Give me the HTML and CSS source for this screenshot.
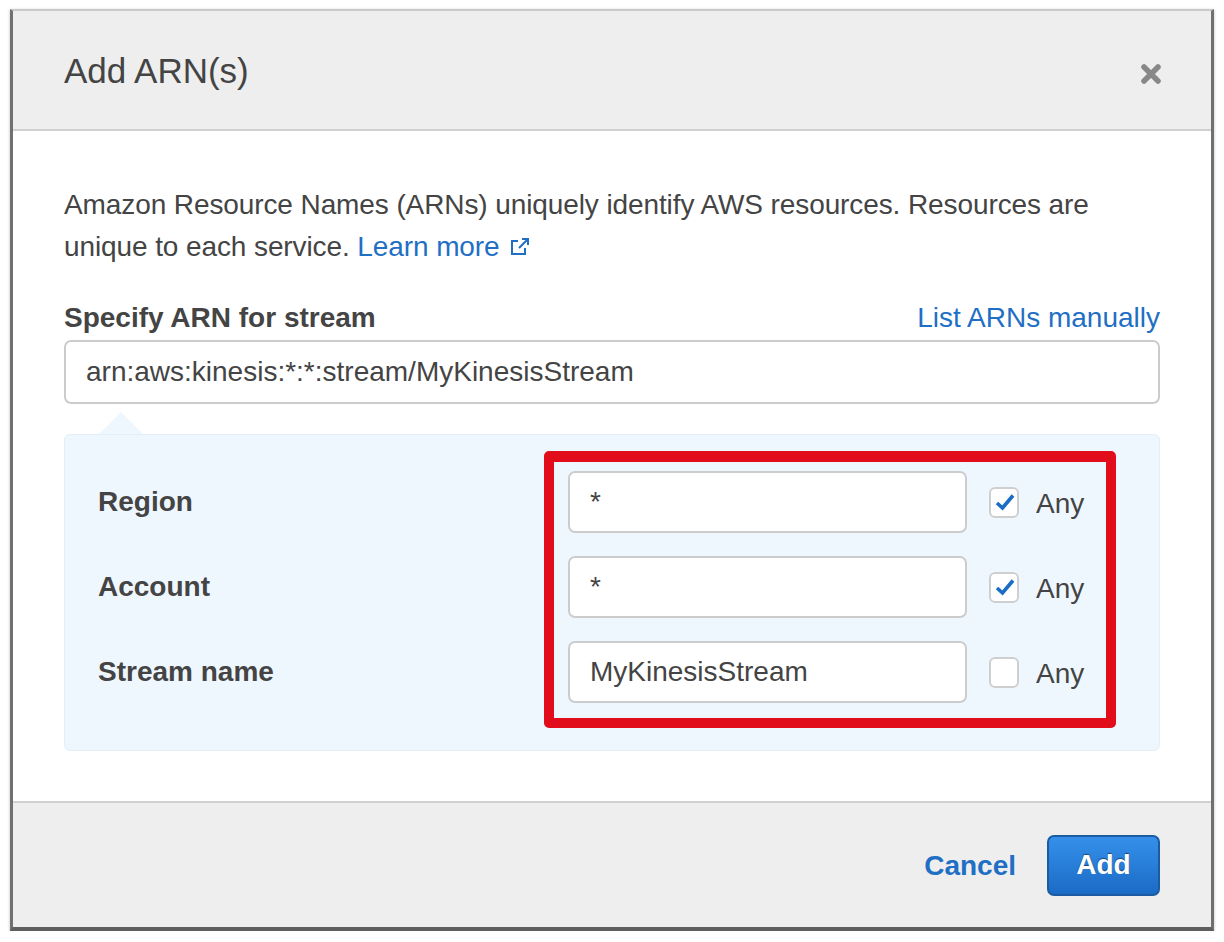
FILE: index.html
```html
<!DOCTYPE html>
<html lang="en">
<head>
<meta charset="utf-8">
<title>Add ARN(s)</title>
<link rel="stylesheet" href="styles.css">
</head>
<body>
<div class="dialog">
  <div class="header">
    <h1 class="title">Add ARN(s)</h1>
    <span class="close" aria-label="Close">
      <svg width="22" height="22" viewBox="0 0 22 22"><path d="M4 4 L18 18 M18 4 L4 18" stroke="#888" stroke-width="5.5" stroke-linecap="round"/></svg>
    </span>
  </div>
  <div class="body">
    <p class="intro">Amazon Resource Names (ARNs) uniquely identify AWS resources. Resources are unique to each service. <a class="link" href="#">Learn more <svg class="ext" width="22" height="20" viewBox="0 0 22 20"><path d="M9 4 H3 V17 H16 V11" fill="none" stroke="#1f6fc5" stroke-width="2"/><path d="M10 11 L19 2 M13 2 H19 V8" fill="none" stroke="#1f6fc5" stroke-width="2"/></svg></a></p>
    <div class="label-row">
      <span class="label">Specify ARN for stream</span>
      <a class="link" href="#">List ARNs manually</a>
    </div>
    <div class="input main-input">arn:aws:kinesis:*:*:stream/MyKinesisStream</div>
    <div class="panel">
      <div class="labels">
        <div class="plabel">Region</div>
        <div class="plabel">Account</div>
        <div class="plabel">Stream name</div>
      </div>
      <div class="highlight">
        <div class="row">
          <div class="input field">*</div>
          <span class="check on"><svg width="22" height="20" viewBox="0 0 22 20"><path d="M3 11 L8.5 16 L19 3.5" fill="none" stroke="#1a6dc4" stroke-width="3.6"/></svg></span>
          <span class="any">Any</span>
        </div>
        <div class="row">
          <div class="input field">*</div>
          <span class="check on"><svg width="22" height="20" viewBox="0 0 22 20"><path d="M3 11 L8.5 16 L19 3.5" fill="none" stroke="#1a6dc4" stroke-width="3.6"/></svg></span>
          <span class="any">Any</span>
        </div>
        <div class="row">
          <div class="input field">MyKinesisStream</div>
          <span class="check"></span>
          <span class="any">Any</span>
        </div>
      </div>
    </div>
  </div>
  <div class="footer">
    <a class="cancel" href="#">Cancel</a>
    <button class="add" type="button">Add</button>
  </div>
</div>
</body>
</html>
```
FILE: styles.css
```css
html, body {
  margin: 0;
  padding: 0;
  background: #ffffff;
}
body {
  font-family: "Liberation Sans", Arial, Helvetica, sans-serif;
  color: #444;
}
.dialog {
  margin: 9px 0 0 10px;
  width: 1198px;
  border-top: 2px solid #c9c9c9;
  border-left: 3px solid #707070;
  border-right: 3px solid #707070;
  border-bottom: 4px solid #5e5e5e;
  box-shadow: 0 1px 3px rgba(0,0,0,0.25);
}
.header {
  height: 118px;
  background: #eeeeee;
  border-bottom: 2px solid #d0d0d0;
  display: flex;
  align-items: center;
  justify-content: space-between;
  padding: 0 51px;
}
.title {
  margin: 0;
  font-size: 35px;
  font-weight: normal;
  color: #444;
  padding-top: 2px;
}
.close {
  display: flex;
  padding-top: 8px;
  margin-right: -2px;
}
.body {
  background: #ffffff;
  padding: 53px 51px 50px;
  border-bottom: 2px solid #d0d0d0;
}
.intro {
  margin: 0;
  font-size: 28px;
  line-height: 42px;
  color: #444;
  letter-spacing: -0.1px;
}
.link {
  color: #1f6fc5;
  text-decoration: none;
}
.ext {
  vertical-align: -1px;
  margin-left: 2px;
}
.label-row {
  margin-top: 32px;
  display: flex;
  justify-content: space-between;
  align-items: center;
  height: 36px;
  font-size: 28px;
}
.label {
  font-weight: bold;
  color: #444;
}
.input {
  box-sizing: border-box;
  background: #fff;
  border: 2px solid #cccccc;
  border-radius: 7px;
  font-size: 28px;
  color: #444;
  display: flex;
  align-items: center;
}
.main-input {
  margin-top: 4px;
  height: 64px;
  padding-left: 20px;
}
.panel {
  position: relative;
  margin-top: 30px;
  background: #eff7fe;
  border: 1px solid #e4eef8;
  border-radius: 6px;
  display: flex;
  padding: 16px 0 22px 33px;
}
.panel::before {
  content: "";
  position: absolute;
  left: 34px;
  top: -23px;
  width: 0;
  height: 0;
  border-left: 22px solid transparent;
  border-right: 22px solid transparent;
  border-bottom: 22px solid #eff7fe;
}
.labels {
  width: 446px;
  padding-top: 20px;
  display: flex;
  flex-direction: column;
  gap: 23px;
}
.plabel {
  height: 62px;
  display: flex;
  align-items: center;
  font-size: 28px;
  font-weight: bold;
  color: #444;
}
.highlight {
  box-sizing: border-box;
  width: 572px;
  border: 10px solid #e10d1b;
  border-top-width: 11px;
  border-radius: 5px;
  padding: 9px 0 15px 14px;
  display: flex;
  flex-direction: column;
  gap: 23px;
}
.row {
  display: flex;
  align-items: center;
  height: 62px;
}
.field {
  width: 399px;
  height: 62px;
  padding-left: 20px;
}
.check {
  box-sizing: border-box;
  width: 30px;
  height: 31px;
  margin-left: 22px;
  background: #fff;
  border: 2px solid #cfcfcf;
  border-radius: 6px;
  display: flex;
  align-items: center;
  justify-content: center;
}
.check svg {
  margin-left: 1px;
}
.any {
  margin-left: 17px;
  font-size: 28px;
  color: #444;
  padding-top: 3px;
}
.footer {
  height: 124px;
  background: #eeeeee;
  display: flex;
  align-items: center;
  justify-content: flex-end;
  padding: 0 51px;
}
.cancel {
  font-size: 28px;
  font-weight: bold;
  color: #1f6fc5;
  text-decoration: none;
  margin-right: 31px;
  padding-top: 2px;
}
.add {
  width: 113px;
  height: 61px;
  box-sizing: border-box;
  border: 2px solid #1a5ba3;
  border-radius: 7px;
  background: linear-gradient(#3590ea, #1b6bc5);
  color: #fff;
  font-family: "Liberation Sans", Arial, sans-serif;
  font-size: 28px;
  font-weight: bold;
  text-shadow: 0 -1px 1px rgba(0,0,0,0.45);
  padding: 0;
  cursor: pointer;
}
```
